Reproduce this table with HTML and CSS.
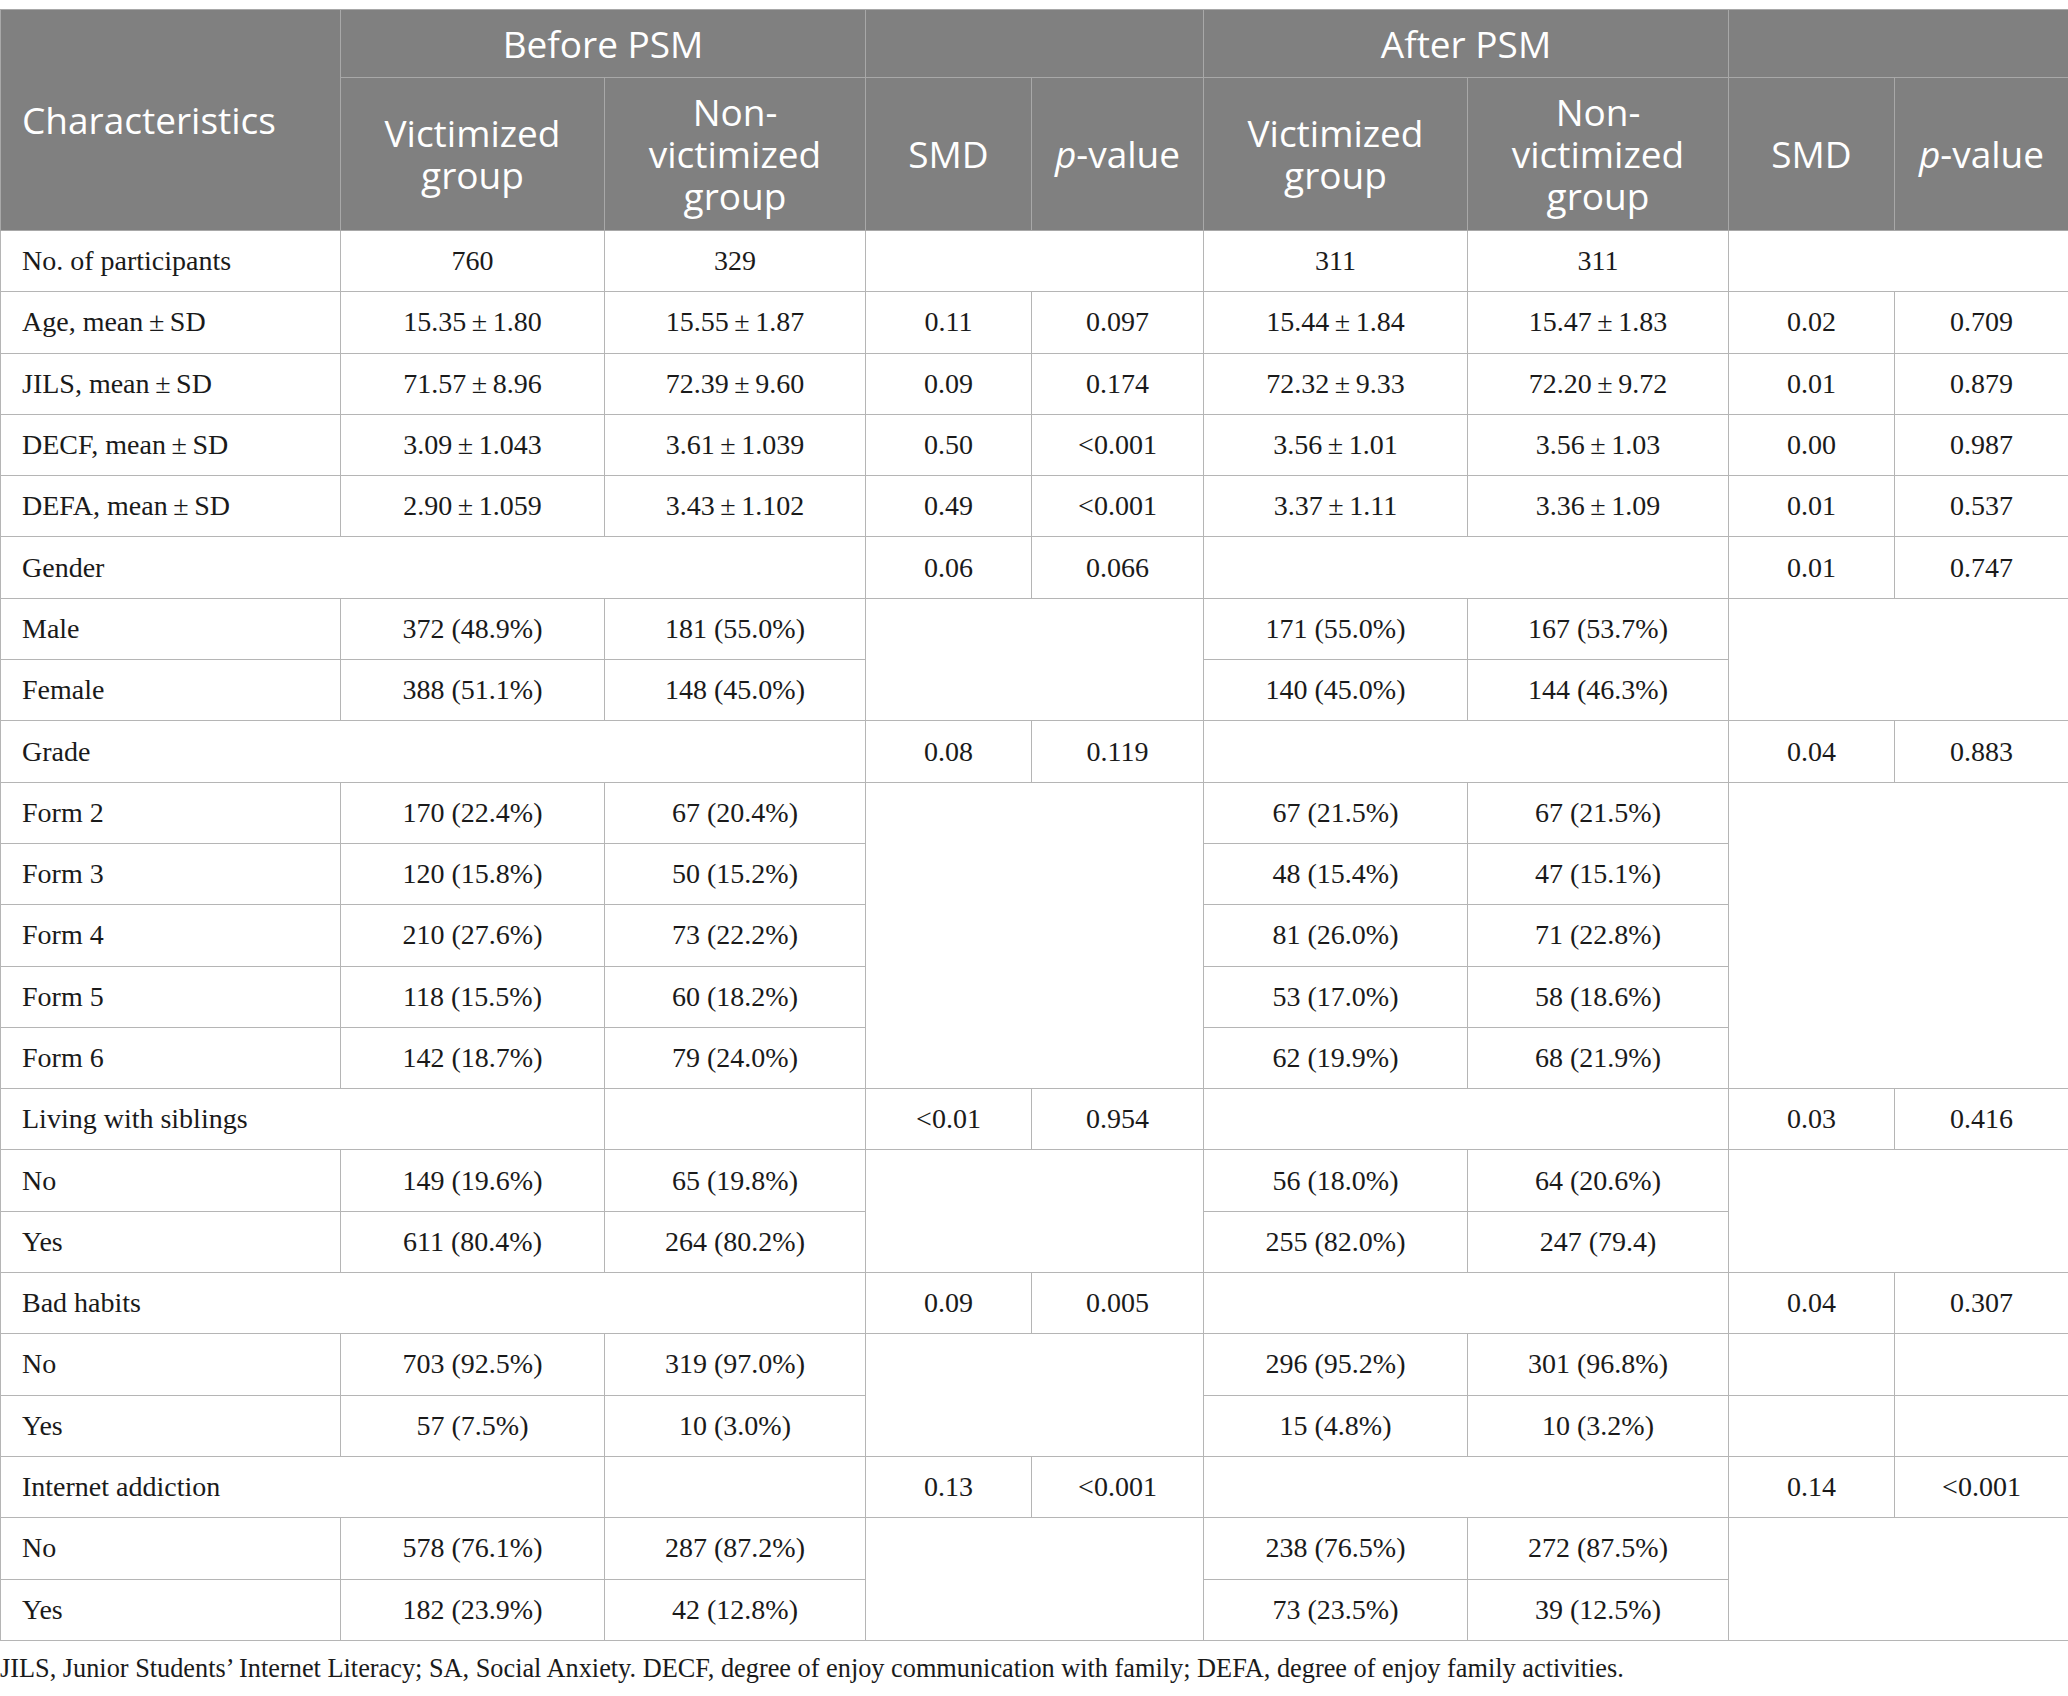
FILE: index.html
```html
<!DOCTYPE html>
<html lang="en">
<head>
<meta charset="utf-8">
<title>Table</title>
<link rel="stylesheet" href="styles.css">
</head>
<body>
<table class="psm">
  <colgroup>
    <col class="c-char"><col class="c-grp"><col class="c-grp2"><col class="c-smd"><col class="c-p">
    <col class="c-grp"><col class="c-grp2"><col class="c-smd"><col class="c-p2">
  </colgroup>
  <thead>
    <tr class="h1">
      <th rowspan="2" class="left">Characteristics</th>
      <th colspan="2">Before PSM</th>
      <th colspan="2"></th>
      <th colspan="2">After PSM</th>
      <th colspan="2"></th>
    </tr>
    <tr class="h2">
      <th>Victimized<br>group</th>
      <th>Non-<br>victimized<br>group</th>
      <th>SMD</th>
      <th class="nw"><i>p</i>-value</th>
      <th>Victimized<br>group</th>
      <th>Non-<br>victimized<br>group</th>
      <th>SMD</th>
      <th class="nw"><i>p</i>-value</th>
    </tr>
  </thead>
  <tbody>
    <tr><td class="left">No. of participants</td><td>760</td><td>329</td><td colspan="2"></td><td>311</td><td>311</td><td colspan="2"></td></tr>
    <tr><td class="left">Age, mean&#8201;±&#8201;SD</td><td>15.35&#8201;±&#8201;1.80</td><td>15.55&#8201;±&#8201;1.87</td><td>0.11</td><td>0.097</td><td>15.44&#8201;±&#8201;1.84</td><td>15.47&#8201;±&#8201;1.83</td><td>0.02</td><td>0.709</td></tr>
    <tr><td class="left">JILS, mean&#8201;±&#8201;SD</td><td>71.57&#8201;±&#8201;8.96</td><td>72.39&#8201;±&#8201;9.60</td><td>0.09</td><td>0.174</td><td>72.32&#8201;±&#8201;9.33</td><td>72.20&#8201;±&#8201;9.72</td><td>0.01</td><td>0.879</td></tr>
    <tr><td class="left">DECF, mean&#8201;±&#8201;SD</td><td>3.09&#8201;±&#8201;1.043</td><td>3.61&#8201;±&#8201;1.039</td><td>0.50</td><td>&lt;0.001</td><td>3.56&#8201;±&#8201;1.01</td><td>3.56&#8201;±&#8201;1.03</td><td>0.00</td><td>0.987</td></tr>
    <tr><td class="left">DEFA, mean&#8201;±&#8201;SD</td><td>2.90&#8201;±&#8201;1.059</td><td>3.43&#8201;±&#8201;1.102</td><td>0.49</td><td>&lt;0.001</td><td>3.37&#8201;±&#8201;1.11</td><td>3.36&#8201;±&#8201;1.09</td><td>0.01</td><td>0.537</td></tr>

    <tr><td class="left" colspan="3">Gender</td><td>0.06</td><td>0.066</td><td colspan="2"></td><td>0.01</td><td>0.747</td></tr>
    <tr><td class="left">Male</td><td>372 (48.9%)</td><td>181 (55.0%)</td><td colspan="2" rowspan="2"></td><td>171 (55.0%)</td><td>167 (53.7%)</td><td colspan="2" rowspan="2"></td></tr>
    <tr><td class="left">Female</td><td>388 (51.1%)</td><td>148 (45.0%)</td><td>140 (45.0%)</td><td>144 (46.3%)</td></tr>

    <tr><td class="left" colspan="3">Grade</td><td>0.08</td><td>0.119</td><td colspan="2"></td><td>0.04</td><td>0.883</td></tr>
    <tr><td class="left">Form 2</td><td>170 (22.4%)</td><td>67 (20.4%)</td><td colspan="2" rowspan="5"></td><td>67 (21.5%)</td><td>67 (21.5%)</td><td colspan="2" rowspan="5"></td></tr>
    <tr><td class="left">Form 3</td><td>120 (15.8%)</td><td>50 (15.2%)</td><td>48 (15.4%)</td><td>47 (15.1%)</td></tr>
    <tr><td class="left">Form 4</td><td>210 (27.6%)</td><td>73 (22.2%)</td><td>81 (26.0%)</td><td>71 (22.8%)</td></tr>
    <tr><td class="left">Form 5</td><td>118 (15.5%)</td><td>60 (18.2%)</td><td>53 (17.0%)</td><td>58 (18.6%)</td></tr>
    <tr><td class="left">Form 6</td><td>142 (18.7%)</td><td>79 (24.0%)</td><td>62 (19.9%)</td><td>68 (21.9%)</td></tr>

    <tr><td class="left" colspan="2">Living with siblings</td><td></td><td>&lt;0.01</td><td>0.954</td><td colspan="2"></td><td>0.03</td><td>0.416</td></tr>
    <tr><td class="left">No</td><td>149 (19.6%)</td><td>65 (19.8%)</td><td colspan="2" rowspan="2"></td><td>56 (18.0%)</td><td>64 (20.6%)</td><td colspan="2" rowspan="2"></td></tr>
    <tr><td class="left">Yes</td><td>611 (80.4%)</td><td>264 (80.2%)</td><td>255 (82.0%)</td><td>247 (79.4)</td></tr>

    <tr><td class="left" colspan="3">Bad habits</td><td>0.09</td><td>0.005</td><td colspan="2"></td><td>0.04</td><td>0.307</td></tr>
    <tr><td class="left">No</td><td>703 (92.5%)</td><td>319 (97.0%)</td><td colspan="2" rowspan="2"></td><td>296 (95.2%)</td><td>301 (96.8%)</td><td></td><td></td></tr>
    <tr><td class="left">Yes</td><td>57 (7.5%)</td><td>10 (3.0%)</td><td>15 (4.8%)</td><td>10 (3.2%)</td><td></td><td></td></tr>

    <tr><td class="left" colspan="2">Internet addiction</td><td></td><td>0.13</td><td>&lt;0.001</td><td colspan="2"></td><td>0.14</td><td>&lt;0.001</td></tr>
    <tr><td class="left">No</td><td>578 (76.1%)</td><td>287 (87.2%)</td><td colspan="2" rowspan="2"></td><td>238 (76.5%)</td><td>272 (87.5%)</td><td colspan="2" rowspan="2"></td></tr>
    <tr><td class="left">Yes</td><td>182 (23.9%)</td><td>42 (12.8%)</td><td>73 (23.5%)</td><td>39 (12.5%)</td></tr>
  </tbody>
</table>
<p class="note">JILS, Junior Students’ Internet Literacy; SA, Social Anxiety. DECF, degree of enjoy communication with family; DEFA, degree of enjoy family activities.</p>
</body>
</html>
```

FILE: styles.css
```css
html, body {
  margin: 0;
  padding: 0;
  background: #ffffff;
}

body {
  padding-top: 9px;
}

.psm {
  width: 2068px;
  table-layout: fixed;
  border-collapse: collapse;
  font-family: "Liberation Serif", "Times New Roman", serif;
  font-size: 28px;
  color: #1a1a1a;
}

.c-char { width: 340px; }
.c-grp { width: 264px; }
.c-grp2 { width: 261px; }
.c-smd { width: 166px; }
.c-p { width: 172px; }
.c-p2 { width: 174px; }

.psm th {
  background: #808080;
  color: #ffffff;
  font-family: "Open Sans", "Noto Sans", sans-serif;
  font-weight: 400;
  font-size: 37px;
  line-height: 42px;
  text-align: center;
  vertical-align: middle;
  border: 1px solid #a8a8a8;
  padding: 0 6px;
}

.psm th i {
  font-style: italic;
}

.psm .h1 th {
  height: 67px;
}

.psm .h2 th {
  height: 152px;
}

.psm th.nw {
  white-space: nowrap;
}

.psm td {
  height: 60.31px;
  border: 1px solid #b5b5b5;
  text-align: center;
  vertical-align: middle;
  padding: 0 8px;
  line-height: 32px;
  white-space: nowrap;
}

.psm th.left,
.psm td.left {
  text-align: left;
  padding-left: 21px;
}

.note {
  margin: 13px 0 0 0;
  font-family: "Liberation Serif", "Times New Roman", serif;
  font-size: 26.3px;
  line-height: 30px;
  color: #1a1a1a;
}
```
